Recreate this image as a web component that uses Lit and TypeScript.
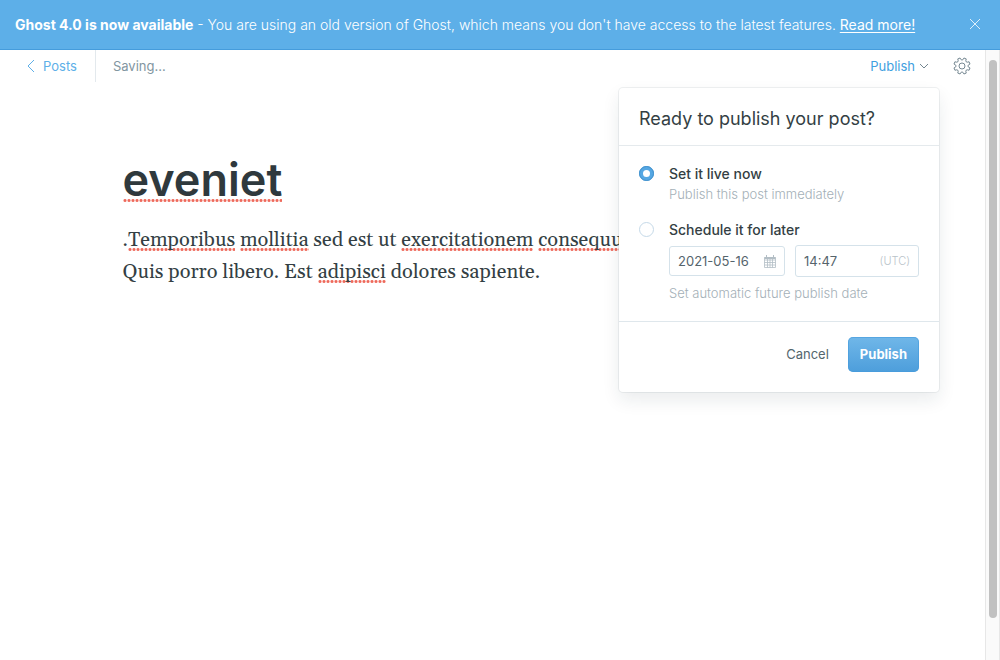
import { LitElement, html, css, svg } from "lit";
import { customElement, state } from "lit/decorators.js";

const misspelt = (word: string) => html`<span class="misspelt">${word}</span>`;

const gearPath = (() => {
  const teeth = 8;
  const points: string[] = [];
  const at = (radius: number, degrees: number) => {
    const a = (degrees * Math.PI) / 180;
    return `${(12 + radius * Math.cos(a)).toFixed(2)} ${(12 + radius * Math.sin(a)).toFixed(2)}`;
  };
  for (let i = 0; i < teeth; i++) {
    const c = (i * 360) / teeth + 22.5;
    points.push(
      `${i ? "L" : "M"}${at(11, c - 9)} L${at(11, c + 9)} L${at(9.2, c + 11)} Q${at(6.6, c + 22.5)} ${at(9.2, c + 34)}`,
    );
  }
  return points.join(" ") + "Z";
})();

@customElement("ghost-banner")
export class GhostBanner extends LitElement {
  static styles = css`
    :host {
      display: block;
    }
    .banner {
      display: flex;
      align-items: center;
      justify-content: space-between;
      box-sizing: border-box;
      padding: 12px 15px;
      border-bottom: 1px solid #459cdc;
      background: #5dafe8;
      color: #fff;
      font-size: 14px;
      line-height: 25px;
      font-weight: 300;
    }
    .message {
      margin: 0;
    }
    .message strong {
      font-weight: 700;
    }
    .more {
      color: #fff;
      font-weight: 400;
      text-underline-offset: 2px;
    }
    .close {
      display: flex;
      padding: 0 4px 2px;
      border: 0;
      background: none;
      color: inherit;
      cursor: pointer;
    }
  `;

  render() {
    return html`
      <aside class="banner">
        <p class="message">
          <strong>Ghost 4.0 is now available</strong> - You are using an old version of Ghost, which means you don't
          have access to the latest features. <a class="more" href="#upgrade">Read more!</a>
        </p>
        <button class="close" type="button" aria-label="Close">
          <svg width="12" height="12" viewBox="0 0 12 12" fill="none" stroke="currentColor" stroke-width="0.8">
            <path d="M1 1 11 11M11 1 1 11" />
          </svg>
        </button>
      </aside>
    `;
  }
}

@customElement("publish-menu")
export class PublishMenu extends LitElement {
  @state() private mode = "now";

  static styles = css`
    :host {
      display: block;
      width: 320px;
      border-radius: 4px;
      background: #fff;
      box-shadow:
        0 0 0 1px rgba(99, 114, 130, 0.1),
        0 8px 18px rgba(27, 39, 51, 0.09);
      color: #343f44;
      font-size: 13px;
      line-height: 20px;
    }
    .title {
      margin: 0;
      padding: 19px 20px 14px;
      border-bottom: 1px solid #e5eaed;
      font-size: 18px;
      line-height: 24px;
      font-weight: 400;
    }
    .options {
      display: grid;
      gap: 16px;
      padding: 18px 20px;
      border-bottom: 1px solid #dfe7ec;
    }
    .option {
      display: grid;
      grid-template-columns: 15px minmax(0, 1fr);
      column-gap: 15px;
      align-items: start;
    }
    .radio {
      appearance: none;
      box-sizing: border-box;
      width: 15px;
      height: 15px;
      margin: 2px 0 0;
      border: 1px solid #c5d9e8;
      border-radius: 50%;
      background: #fff;
    }
    .radio:checked {
      border: 4px solid #55a7e3;
      outline: 1px solid #4592cc;
      outline-offset: -1px;
    }
    .label {
      display: block;
      font-size: 14px;
      font-weight: 500;
    }
    .hint {
      margin: 0;
      color: #a4b0b7;
      font-weight: 300;
      font-size: 13px;
    }
    .fields {
      display: grid;
      grid-template-columns: 116px minmax(0, 1fr);
      gap: 10px;
      align-items: center;
      margin: 5px 0 6px;
    }
    .field {
      display: flex;
      align-items: center;
      gap: 4px;
      box-sizing: border-box;
      height: 30px;
      padding: 0 8px;
      border: 1px solid #d5e2ea;
      border-radius: 3px;
    }
    .time {
      height: 32px;
    }
    .input {
      flex: 1;
      min-width: 0;
      padding: 0;
      border: 0;
      outline: 0;
      background: none;
      color: #55646c;
      font: inherit;
    }
    .zone {
      color: #b9c3c9;
      font-size: 11px;
      font-weight: 300;
    }
    .footer {
      display: flex;
      justify-content: flex-end;
      align-items: center;
      gap: 7px;
      padding: 15px 20px 20px;
    }
    .button {
      padding: 0 12px;
      border: 0;
      border-radius: 5px;
      background: none;
      color: #54666d;
      font: inherit;
      line-height: 35px;
      cursor: pointer;
    }
    .primary {
      background: linear-gradient(#70b7e9, #4d9edb);
      box-shadow: inset 0 0 0 1px rgba(70, 155, 220, 0.6);
      color: #fff;
      font-weight: 700;
    }
  `;

  private choose(event: Event) {
    this.mode = (event.target as HTMLInputElement).value;
  }

  render() {
    return html`
      <h2 class="title">Ready to publish your post?</h2>
      <div class="options">
        <div class="option">
          <input
            class="radio"
            type="radio"
            name="when"
            id="now"
            value="now"
            .checked=${this.mode === "now"}
            @change=${this.choose}
          />
          <div>
            <label class="label" for="now">Set it live now</label>
            <p class="hint">Publish this post immediately</p>
          </div>
        </div>
        <div class="option">
          <input
            class="radio"
            type="radio"
            name="when"
            id="later"
            value="later"
            .checked=${this.mode === "later"}
            @change=${this.choose}
          />
          <div>
            <label class="label" for="later">Schedule it for later</label>
            <div class="fields">
              <div class="field">
                <input class="input" type="text" size="1" aria-label="Publish date" value="2021-05-16" />
                <svg width="12" height="13" viewBox="0 0 12 13" fill="none" stroke="#b3bec5">
                  <path d="M.5 2.5h11v10h-11zM.5 5h11M.5 7.5h11M.5 10h11M3.5 4v8.5M6 4v8.5M8.5 4v8.5" stroke-width=".8" />
                  <path d="M.5 3h11" stroke-width="2" />
                  <path d="M2.5 0v2.5M9.5 0v2.5" />
                </svg>
              </div>
              <div class="field time">
                <input class="input" type="text" size="1" id="time" aria-label="Publish time" value="14:47" />
                <label class="zone" for="time">(UTC)</label>
              </div>
            </div>
            <p class="hint">Set automatic future publish date</p>
          </div>
        </div>
      </div>
      <footer class="footer">
        <button class="button" type="button">Cancel</button>
        <button class="button primary" type="button">Publish</button>
      </footer>
    `;
  }
}

@customElement("app-root")
export class AppRoot extends LitElement {
  static styles = css`
    :host {
      display: flex;
      flex-direction: column;
      height: 100vh;
      overflow: hidden;
      background: #fff;
      color: #343f44;
      font-family: Inter, "Liberation Sans", sans-serif;
      font-size: 13px;
      line-height: 20px;
    }
    .body {
      display: flex;
      flex: 1;
      min-height: 0;
    }
    .editor {
      flex: 1;
      min-width: 0;
    }
    .toolbar {
      display: flex;
      align-items: center;
      justify-content: space-between;
      height: 32px;
      padding: 0 14px 0 26px;
    }
    .group {
      display: flex;
      align-items: center;
      align-self: stretch;
    }
    .back {
      display: flex;
      align-items: center;
      align-self: stretch;
      gap: 8px;
      padding-right: 18px;
      border-right: 1px solid #e3e9ed;
      color: #5dafe8;
      text-decoration: none;
    }
    .status {
      padding-left: 17px;
      color: #8296a1;
    }
    .anchor {
      position: relative;
    }
    .trigger,
    .settings {
      display: flex;
      align-items: center;
      padding: 0;
      border: 0;
      background: none;
      color: #738690;
      font: inherit;
      cursor: pointer;
    }
    .trigger {
      gap: 4px;
    }
    .trigger-text {
      color: #3fa0e0;
    }
    .menu {
      position: absolute;
      z-index: 1;
      top: 32px;
      right: -10px;
    }
    .settings {
      margin-left: 24px;
    }
    .post {
      max-width: 740px;
      margin: 0 auto;
      padding: 69px 40px 0;
    }
    .title {
      --dots-lift: 5px;
      margin: 0 0 15px;
      color: #2f393d;
      font-size: 45px;
      line-height: 58px;
      font-weight: 600;
    }
    .content {
      --dots-lift: 2px;
      margin: 0;
      font-family: Georgia, Gelasio, "Liberation Serif", serif;
      font-size: 20px;
      line-height: 32px;
    }
    .misspelt {
      background: radial-gradient(circle, #ee6a5c 1px, rgba(238, 106, 92, 0) 2px) left bottom var(--dots-lift) / 4px 3px
        repeat-x;
    }
    .scrollbar {
      box-sizing: border-box;
      width: 15px;
      padding: 10px 2px 42px 3px;
      border: solid #e7e7e7;
      border-width: 0 1px;
      background: #fafafa;
    }
    .thumb {
      height: 100%;
      border-radius: 4px;
      background: #c1c1c1;
    }
  `;

  render() {
    return html`
      <ghost-banner></ghost-banner>
      <div class="body">
        <main class="editor">
          <header class="toolbar">
            <div class="group">
              <a class="back" href="#posts">
                <svg width="9" height="14" viewBox="0 0 9 14" fill="none" stroke="currentColor">
                  <path d="M8 1 2 7l6 6" />
                </svg>
                Posts
              </a>
              <span class="status">Saving...</span>
            </div>
            <div class="group">
              <div class="anchor">
                <button class="trigger" type="button" aria-expanded="true">
                  <span class="trigger-text">Publish</span>
                  <svg width="10" height="6" viewBox="0 0 10 6" fill="none" stroke="currentColor">
                    <path d="m1 1 4 4 4-4" />
                  </svg>
                </button>
                <publish-menu class="menu"></publish-menu>
              </div>
              <button class="settings" type="button" aria-label="Settings">
                <svg width="18" height="18" viewBox="0 0 24 24" fill="none" stroke="currentColor" stroke-width="1.3">
                  ${svg`<path d=${gearPath} stroke-linejoin="round" />`}
                  <circle cx="12" cy="12" r="4" />
                </svg>
              </button>
            </div>
          </header>
          <article class="post">
            <h1 class="title">${misspelt("eveniet")}</h1>
            <p class="content">
              .${misspelt("Temporibus")} ${misspelt("mollitia")} sed est ut ${misspelt("exercitationem")}
              ${misspelt("consequuntur")}.<br />
              Quis porro libero. Est ${misspelt("adipisci")} dolores sapiente.
            </p>
          </article>
        </main>
        <div class="scrollbar" aria-hidden="true"><div class="thumb"></div></div>
      </div>
    `;
  }
}
